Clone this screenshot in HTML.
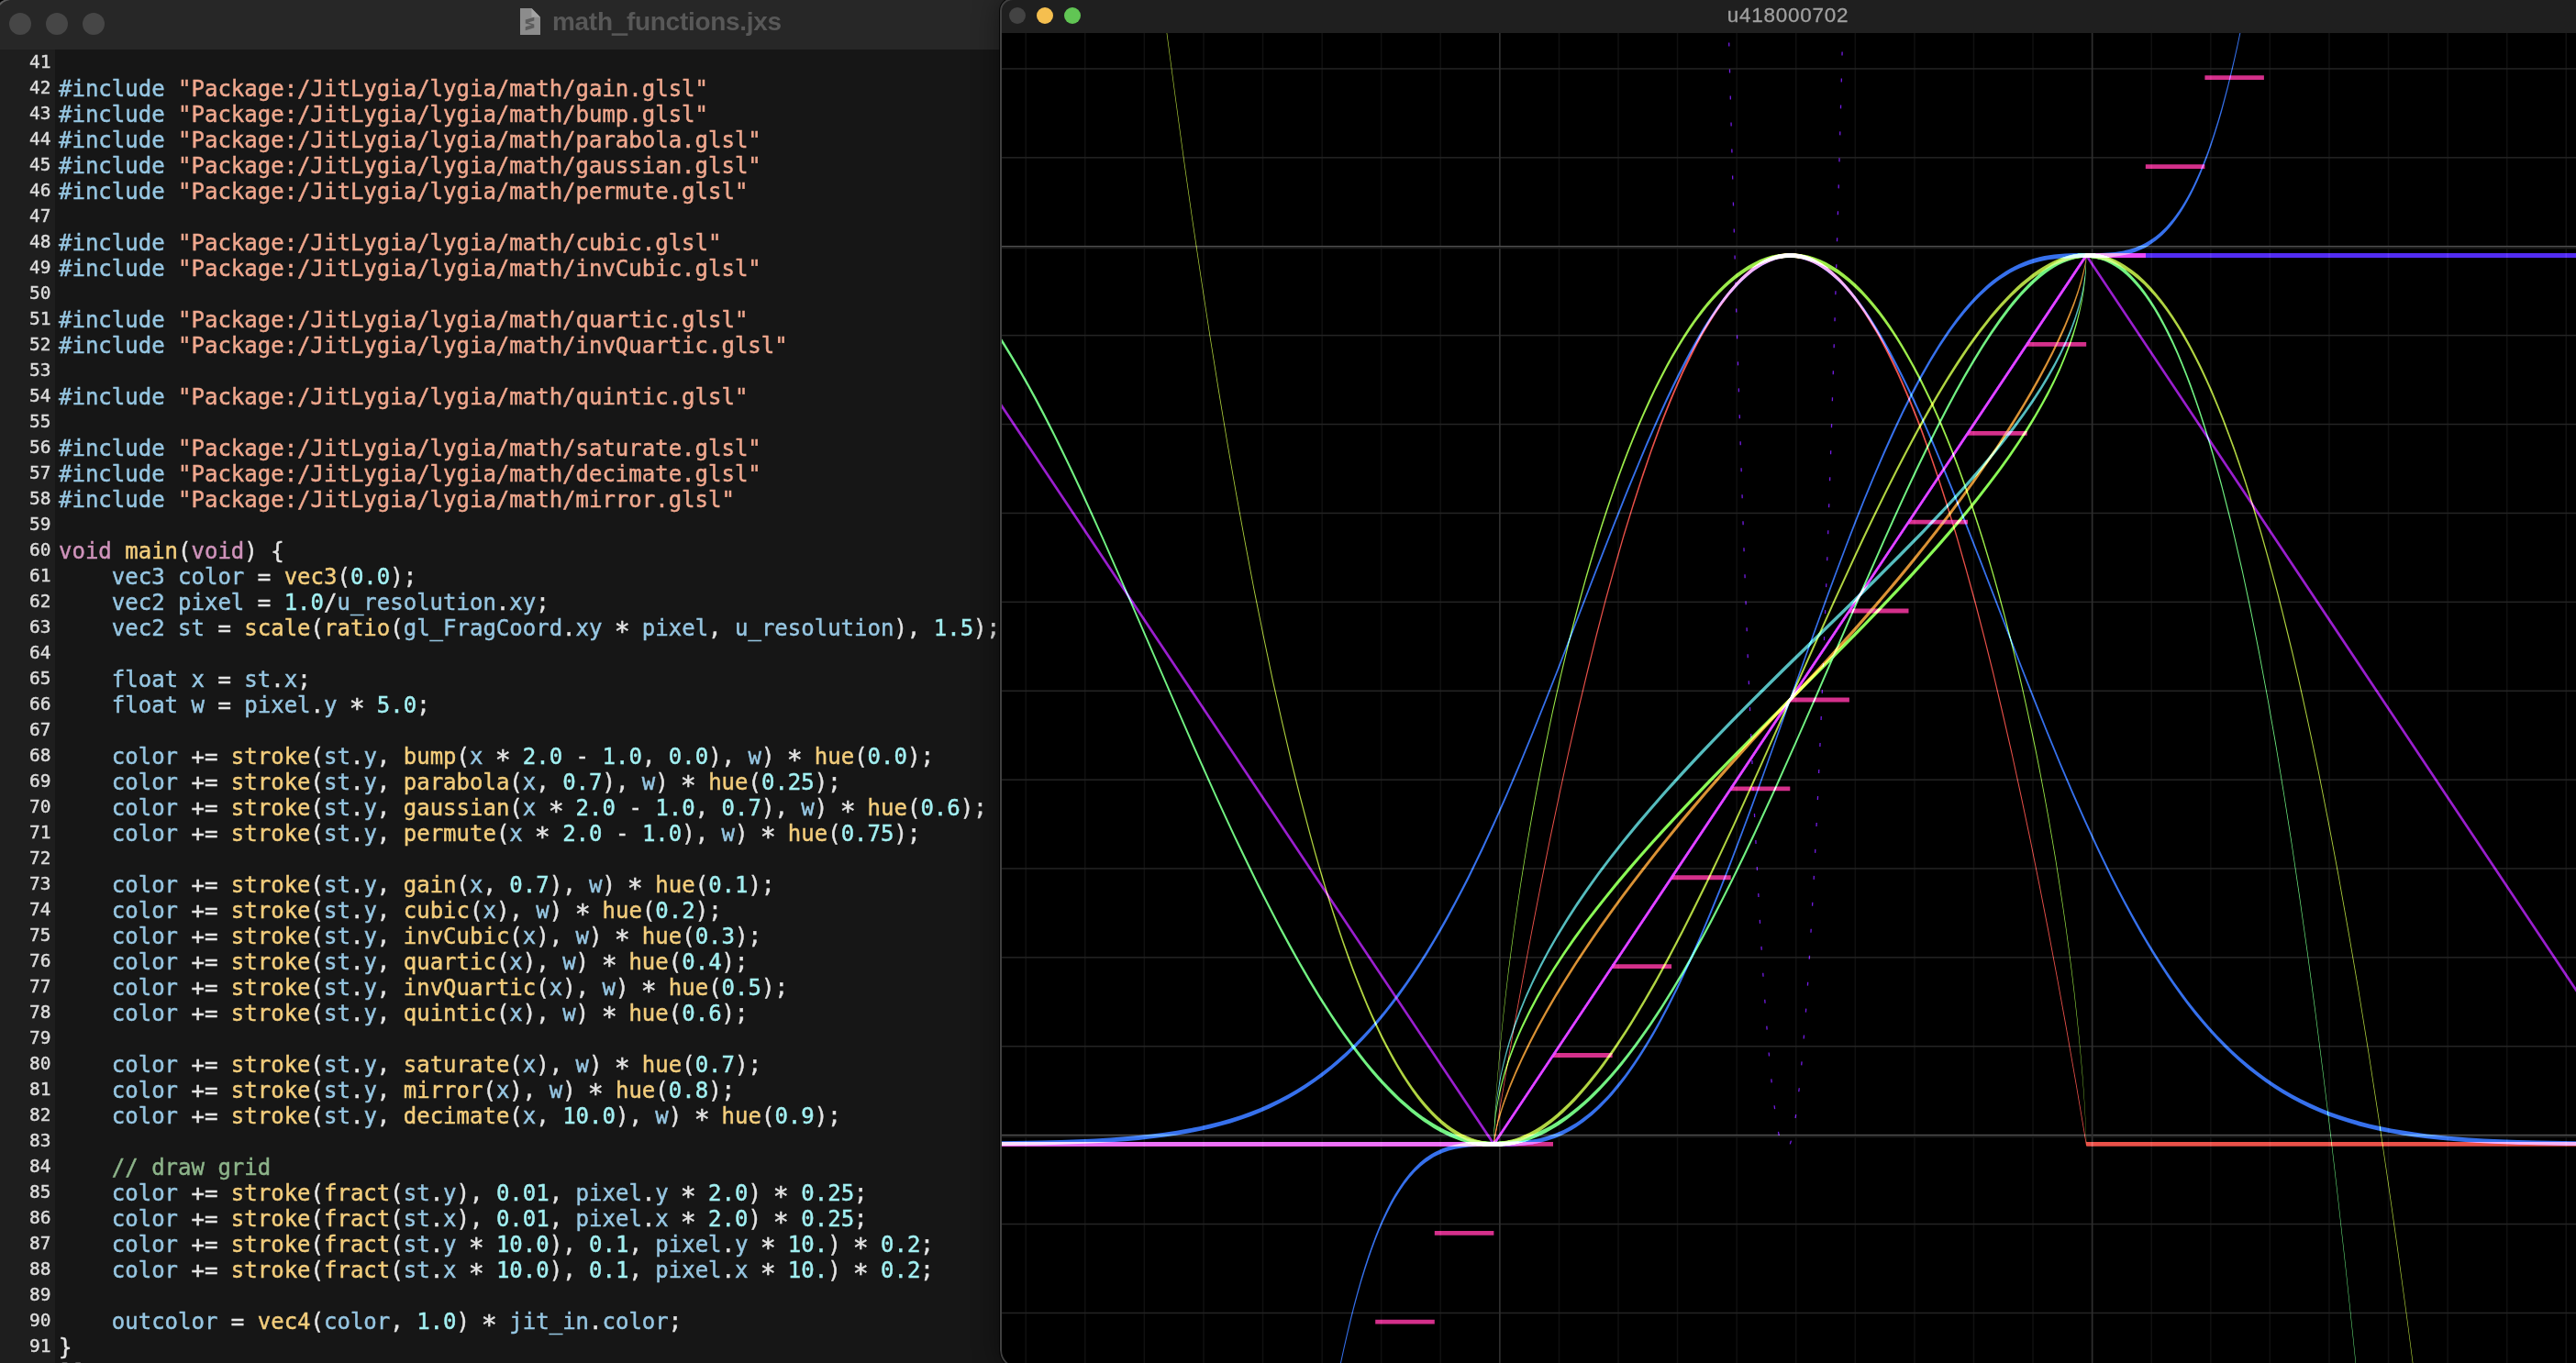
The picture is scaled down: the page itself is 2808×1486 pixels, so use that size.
<!DOCTYPE html>
<html>
<head>
<meta charset="utf-8">
<title>math_functions.jxs</title>
<style>
html,body{margin:0;padding:0;background:#000;}
body{width:2808px;height:1486px;overflow:hidden;position:relative;font-family:"Liberation Sans",sans-serif;}
.lw{position:absolute;left:-7px;top:-2px;width:1107px;height:1488px;background:#161616;border-top-left-radius:20px;overflow:hidden;}
.lwi{position:absolute;left:7px;top:2px;right:0;bottom:0;}
.lw .hl{position:absolute;left:0;top:0;width:60px;height:60px;border-top-left-radius:20px;box-shadow:inset 1.6px 1.6px 0 rgba(255,255,255,.25);}
.lt{position:absolute;left:-7px;top:-2px;right:0;height:56px;background:#272727;}
.lt>*{margin-left:7px;margin-top:2px}
.lt .dot{position:absolute;top:14px;width:24px;height:24px;border-radius:50%;background:#464646;}
.lt .title{position:absolute;left:602px;top:-3px;height:54px;line-height:54px;font-weight:bold;font-size:28px;letter-spacing:-0.3px;color:#585858;white-space:nowrap;will-change:transform;}
.lt svg.ico{position:absolute;left:567px;top:9px;}
.gut{position:absolute;left:-7px;top:54px;width:67px;bottom:0;background:#1e1e1e;}
.code{position:absolute;left:0;top:55px;will-change:transform;-webkit-text-stroke:0.45px;width:1100px;font-family:"DejaVu Sans Mono","Liberation Mono",monospace;font-size:24px;line-height:28px;color:#e4e4e4;}
.ln{height:28px;position:relative;}
.no{position:absolute;left:0;top:-1px;width:55.5px;text-align:right;font-size:19.5px;color:#dcdcdc;line-height:28px;}
.tx{position:absolute;left:64px;top:0;white-space:pre;}
.i{color:#96c6e2}.s{color:#f0a88e}.f{color:#f3cd7c}.n{color:#a2f0f2}.o{color:#e4e4e4}.a{color:#e4e4e4;display:inline-block;transform:translateY(4px) scale(1.18)}.k{color:#cf93bb}.m{color:#8db48a}
.rw{position:absolute;left:1090px;top:-2px;width:1740px;height:1494px;background:#000;border-radius:14px 0 0 20px;overflow:hidden;box-shadow:0 0 0 1px rgba(0,0,0,.8),0 0 30px rgba(0,0,0,.45);}
.rwi{position:absolute;left:0;top:2px;right:0;bottom:0;}
.rw .ring{position:absolute;left:0;top:0;right:-10px;bottom:0;border:2px solid #404040;border-radius:14px 0 0 20px;}
.rt{position:absolute;left:0;top:0;width:100%;height:36px;background:#1f1f1f;}
.rt .dot{position:absolute;top:8px;width:18px;height:18px;border-radius:50%;}
.rt .title{position:absolute;left:0;width:1718px;text-align:center;top:0;height:36px;line-height:34px;font-size:22.5px;letter-spacing:0.75px;-webkit-text-stroke:0.3px;color:#a0a0a0;will-change:transform;}
svg.plot{position:absolute;left:2px;top:36px;isolation:isolate;}
svg.plot .c{mix-blend-mode:plus-lighter;}
</style>
</head>
<body>
<div class="lw"><div class="lwi">
  <div class="lt">
    <div class="dot" style="left:10px"></div>
    <div class="dot" style="left:50px"></div>
    <div class="dot" style="left:90px"></div>
    <svg class="ico" width="22" height="29" viewBox="0 0 23 30" preserveAspectRatio="none"><path d="M0,0H13L23,10V30H0Z" fill="#8c8c8c"/><path d="M13,0L23,10H13Z" fill="#a4a4a4"/><path d="M6,13L16,10V14L9,16L16,18V22L6,25V21L13,19L6,17Z" fill="#5c5c5c"/></svg>
    <div class="title">math<span style="-webkit-text-stroke:1.5px #585858;position:relative;top:1.5px">_</span>functions.jxs</div>
  </div>
  <div class="gut"></div>
  <div class="code">
<div class="ln"><span class="no">41</span><span class="tx"></span></div>
<div class="ln"><span class="no">42</span><span class="tx"><span class="i">#include</span> <span class="s">&quot;Package:/JitLygia/lygia/math/gain.glsl&quot;</span></span></div>
<div class="ln"><span class="no">43</span><span class="tx"><span class="i">#include</span> <span class="s">&quot;Package:/JitLygia/lygia/math/bump.glsl&quot;</span></span></div>
<div class="ln"><span class="no">44</span><span class="tx"><span class="i">#include</span> <span class="s">&quot;Package:/JitLygia/lygia/math/parabola.glsl&quot;</span></span></div>
<div class="ln"><span class="no">45</span><span class="tx"><span class="i">#include</span> <span class="s">&quot;Package:/JitLygia/lygia/math/gaussian.glsl&quot;</span></span></div>
<div class="ln"><span class="no">46</span><span class="tx"><span class="i">#include</span> <span class="s">&quot;Package:/JitLygia/lygia/math/permute.glsl&quot;</span></span></div>
<div class="ln"><span class="no">47</span><span class="tx"></span></div>
<div class="ln"><span class="no">48</span><span class="tx"><span class="i">#include</span> <span class="s">&quot;Package:/JitLygia/lygia/math/cubic.glsl&quot;</span></span></div>
<div class="ln"><span class="no">49</span><span class="tx"><span class="i">#include</span> <span class="s">&quot;Package:/JitLygia/lygia/math/invCubic.glsl&quot;</span></span></div>
<div class="ln"><span class="no">50</span><span class="tx"></span></div>
<div class="ln"><span class="no">51</span><span class="tx"><span class="i">#include</span> <span class="s">&quot;Package:/JitLygia/lygia/math/quartic.glsl&quot;</span></span></div>
<div class="ln"><span class="no">52</span><span class="tx"><span class="i">#include</span> <span class="s">&quot;Package:/JitLygia/lygia/math/invQuartic.glsl&quot;</span></span></div>
<div class="ln"><span class="no">53</span><span class="tx"></span></div>
<div class="ln"><span class="no">54</span><span class="tx"><span class="i">#include</span> <span class="s">&quot;Package:/JitLygia/lygia/math/quintic.glsl&quot;</span></span></div>
<div class="ln"><span class="no">55</span><span class="tx"></span></div>
<div class="ln"><span class="no">56</span><span class="tx"><span class="i">#include</span> <span class="s">&quot;Package:/JitLygia/lygia/math/saturate.glsl&quot;</span></span></div>
<div class="ln"><span class="no">57</span><span class="tx"><span class="i">#include</span> <span class="s">&quot;Package:/JitLygia/lygia/math/decimate.glsl&quot;</span></span></div>
<div class="ln"><span class="no">58</span><span class="tx"><span class="i">#include</span> <span class="s">&quot;Package:/JitLygia/lygia/math/mirror.glsl&quot;</span></span></div>
<div class="ln"><span class="no">59</span><span class="tx"></span></div>
<div class="ln"><span class="no">60</span><span class="tx"><span class="k">void</span> <span class="f">main</span><span class="o">(</span><span class="k">void</span><span class="o">)</span> <span class="o">{</span></span></div>
<div class="ln"><span class="no">61</span><span class="tx">    <span class="i">vec3</span> <span class="i">color</span> <span class="o">=</span> <span class="f">vec3</span><span class="o">(</span><span class="n">0.0</span><span class="o">)</span><span class="o">;</span></span></div>
<div class="ln"><span class="no">62</span><span class="tx">    <span class="i">vec2</span> <span class="i">pixel</span> <span class="o">=</span> <span class="n">1.0</span><span class="o">/</span><span class="i">u_resolution</span><span class="o">.</span><span class="i">xy</span><span class="o">;</span></span></div>
<div class="ln"><span class="no">63</span><span class="tx">    <span class="i">vec2</span> <span class="i">st</span> <span class="o">=</span> <span class="f">scale</span><span class="o">(</span><span class="f">ratio</span><span class="o">(</span><span class="i">gl_FragCoord</span><span class="o">.</span><span class="i">xy</span> <span class="a">*</span> <span class="i">pixel</span><span class="o">,</span> <span class="i">u_resolution</span><span class="o">)</span><span class="o">,</span> <span class="n">1.5</span><span class="o">)</span><span class="o">;</span></span></div>
<div class="ln"><span class="no">64</span><span class="tx"></span></div>
<div class="ln"><span class="no">65</span><span class="tx">    <span class="i">float</span> <span class="i">x</span> <span class="o">=</span> <span class="i">st</span><span class="o">.</span><span class="i">x</span><span class="o">;</span></span></div>
<div class="ln"><span class="no">66</span><span class="tx">    <span class="i">float</span> <span class="i">w</span> <span class="o">=</span> <span class="i">pixel</span><span class="o">.</span><span class="i">y</span> <span class="a">*</span> <span class="n">5.0</span><span class="o">;</span></span></div>
<div class="ln"><span class="no">67</span><span class="tx"></span></div>
<div class="ln"><span class="no">68</span><span class="tx">    <span class="i">color</span> <span class="o">+</span><span class="o">=</span> <span class="f">stroke</span><span class="o">(</span><span class="i">st</span><span class="o">.</span><span class="i">y</span><span class="o">,</span> <span class="f">bump</span><span class="o">(</span><span class="i">x</span> <span class="a">*</span> <span class="n">2.0</span> <span class="o">-</span> <span class="n">1.0</span><span class="o">,</span> <span class="n">0.0</span><span class="o">)</span><span class="o">,</span> <span class="i">w</span><span class="o">)</span> <span class="a">*</span> <span class="f">hue</span><span class="o">(</span><span class="n">0.0</span><span class="o">)</span><span class="o">;</span></span></div>
<div class="ln"><span class="no">69</span><span class="tx">    <span class="i">color</span> <span class="o">+</span><span class="o">=</span> <span class="f">stroke</span><span class="o">(</span><span class="i">st</span><span class="o">.</span><span class="i">y</span><span class="o">,</span> <span class="f">parabola</span><span class="o">(</span><span class="i">x</span><span class="o">,</span> <span class="n">0.7</span><span class="o">)</span><span class="o">,</span> <span class="i">w</span><span class="o">)</span> <span class="a">*</span> <span class="f">hue</span><span class="o">(</span><span class="n">0.25</span><span class="o">)</span><span class="o">;</span></span></div>
<div class="ln"><span class="no">70</span><span class="tx">    <span class="i">color</span> <span class="o">+</span><span class="o">=</span> <span class="f">stroke</span><span class="o">(</span><span class="i">st</span><span class="o">.</span><span class="i">y</span><span class="o">,</span> <span class="f">gaussian</span><span class="o">(</span><span class="i">x</span> <span class="a">*</span> <span class="n">2.0</span> <span class="o">-</span> <span class="n">1.0</span><span class="o">,</span> <span class="n">0.7</span><span class="o">)</span><span class="o">,</span> <span class="i">w</span><span class="o">)</span> <span class="a">*</span> <span class="f">hue</span><span class="o">(</span><span class="n">0.6</span><span class="o">)</span><span class="o">;</span></span></div>
<div class="ln"><span class="no">71</span><span class="tx">    <span class="i">color</span> <span class="o">+</span><span class="o">=</span> <span class="f">stroke</span><span class="o">(</span><span class="i">st</span><span class="o">.</span><span class="i">y</span><span class="o">,</span> <span class="f">permute</span><span class="o">(</span><span class="i">x</span> <span class="a">*</span> <span class="n">2.0</span> <span class="o">-</span> <span class="n">1.0</span><span class="o">)</span><span class="o">,</span> <span class="i">w</span><span class="o">)</span> <span class="a">*</span> <span class="f">hue</span><span class="o">(</span><span class="n">0.75</span><span class="o">)</span><span class="o">;</span></span></div>
<div class="ln"><span class="no">72</span><span class="tx"></span></div>
<div class="ln"><span class="no">73</span><span class="tx">    <span class="i">color</span> <span class="o">+</span><span class="o">=</span> <span class="f">stroke</span><span class="o">(</span><span class="i">st</span><span class="o">.</span><span class="i">y</span><span class="o">,</span> <span class="f">gain</span><span class="o">(</span><span class="i">x</span><span class="o">,</span> <span class="n">0.7</span><span class="o">)</span><span class="o">,</span> <span class="i">w</span><span class="o">)</span> <span class="a">*</span> <span class="f">hue</span><span class="o">(</span><span class="n">0.1</span><span class="o">)</span><span class="o">;</span></span></div>
<div class="ln"><span class="no">74</span><span class="tx">    <span class="i">color</span> <span class="o">+</span><span class="o">=</span> <span class="f">stroke</span><span class="o">(</span><span class="i">st</span><span class="o">.</span><span class="i">y</span><span class="o">,</span> <span class="f">cubic</span><span class="o">(</span><span class="i">x</span><span class="o">)</span><span class="o">,</span> <span class="i">w</span><span class="o">)</span> <span class="a">*</span> <span class="f">hue</span><span class="o">(</span><span class="n">0.2</span><span class="o">)</span><span class="o">;</span></span></div>
<div class="ln"><span class="no">75</span><span class="tx">    <span class="i">color</span> <span class="o">+</span><span class="o">=</span> <span class="f">stroke</span><span class="o">(</span><span class="i">st</span><span class="o">.</span><span class="i">y</span><span class="o">,</span> <span class="f">invCubic</span><span class="o">(</span><span class="i">x</span><span class="o">)</span><span class="o">,</span> <span class="i">w</span><span class="o">)</span> <span class="a">*</span> <span class="f">hue</span><span class="o">(</span><span class="n">0.3</span><span class="o">)</span><span class="o">;</span></span></div>
<div class="ln"><span class="no">76</span><span class="tx">    <span class="i">color</span> <span class="o">+</span><span class="o">=</span> <span class="f">stroke</span><span class="o">(</span><span class="i">st</span><span class="o">.</span><span class="i">y</span><span class="o">,</span> <span class="f">quartic</span><span class="o">(</span><span class="i">x</span><span class="o">)</span><span class="o">,</span> <span class="i">w</span><span class="o">)</span> <span class="a">*</span> <span class="f">hue</span><span class="o">(</span><span class="n">0.4</span><span class="o">)</span><span class="o">;</span></span></div>
<div class="ln"><span class="no">77</span><span class="tx">    <span class="i">color</span> <span class="o">+</span><span class="o">=</span> <span class="f">stroke</span><span class="o">(</span><span class="i">st</span><span class="o">.</span><span class="i">y</span><span class="o">,</span> <span class="f">invQuartic</span><span class="o">(</span><span class="i">x</span><span class="o">)</span><span class="o">,</span> <span class="i">w</span><span class="o">)</span> <span class="a">*</span> <span class="f">hue</span><span class="o">(</span><span class="n">0.5</span><span class="o">)</span><span class="o">;</span></span></div>
<div class="ln"><span class="no">78</span><span class="tx">    <span class="i">color</span> <span class="o">+</span><span class="o">=</span> <span class="f">stroke</span><span class="o">(</span><span class="i">st</span><span class="o">.</span><span class="i">y</span><span class="o">,</span> <span class="f">quintic</span><span class="o">(</span><span class="i">x</span><span class="o">)</span><span class="o">,</span> <span class="i">w</span><span class="o">)</span> <span class="a">*</span> <span class="f">hue</span><span class="o">(</span><span class="n">0.6</span><span class="o">)</span><span class="o">;</span></span></div>
<div class="ln"><span class="no">79</span><span class="tx"></span></div>
<div class="ln"><span class="no">80</span><span class="tx">    <span class="i">color</span> <span class="o">+</span><span class="o">=</span> <span class="f">stroke</span><span class="o">(</span><span class="i">st</span><span class="o">.</span><span class="i">y</span><span class="o">,</span> <span class="f">saturate</span><span class="o">(</span><span class="i">x</span><span class="o">)</span><span class="o">,</span> <span class="i">w</span><span class="o">)</span> <span class="a">*</span> <span class="f">hue</span><span class="o">(</span><span class="n">0.7</span><span class="o">)</span><span class="o">;</span></span></div>
<div class="ln"><span class="no">81</span><span class="tx">    <span class="i">color</span> <span class="o">+</span><span class="o">=</span> <span class="f">stroke</span><span class="o">(</span><span class="i">st</span><span class="o">.</span><span class="i">y</span><span class="o">,</span> <span class="f">mirror</span><span class="o">(</span><span class="i">x</span><span class="o">)</span><span class="o">,</span> <span class="i">w</span><span class="o">)</span> <span class="a">*</span> <span class="f">hue</span><span class="o">(</span><span class="n">0.8</span><span class="o">)</span><span class="o">;</span></span></div>
<div class="ln"><span class="no">82</span><span class="tx">    <span class="i">color</span> <span class="o">+</span><span class="o">=</span> <span class="f">stroke</span><span class="o">(</span><span class="i">st</span><span class="o">.</span><span class="i">y</span><span class="o">,</span> <span class="f">decimate</span><span class="o">(</span><span class="i">x</span><span class="o">,</span> <span class="n">10.0</span><span class="o">)</span><span class="o">,</span> <span class="i">w</span><span class="o">)</span> <span class="a">*</span> <span class="f">hue</span><span class="o">(</span><span class="n">0.9</span><span class="o">)</span><span class="o">;</span></span></div>
<div class="ln"><span class="no">83</span><span class="tx"></span></div>
<div class="ln"><span class="no">84</span><span class="tx">    <span class="m">// draw grid</span></span></div>
<div class="ln"><span class="no">85</span><span class="tx">    <span class="i">color</span> <span class="o">+</span><span class="o">=</span> <span class="f">stroke</span><span class="o">(</span><span class="f">fract</span><span class="o">(</span><span class="i">st</span><span class="o">.</span><span class="i">y</span><span class="o">)</span><span class="o">,</span> <span class="n">0.01</span><span class="o">,</span> <span class="i">pixel</span><span class="o">.</span><span class="i">y</span> <span class="a">*</span> <span class="n">2.0</span><span class="o">)</span> <span class="a">*</span> <span class="n">0.25</span><span class="o">;</span></span></div>
<div class="ln"><span class="no">86</span><span class="tx">    <span class="i">color</span> <span class="o">+</span><span class="o">=</span> <span class="f">stroke</span><span class="o">(</span><span class="f">fract</span><span class="o">(</span><span class="i">st</span><span class="o">.</span><span class="i">x</span><span class="o">)</span><span class="o">,</span> <span class="n">0.01</span><span class="o">,</span> <span class="i">pixel</span><span class="o">.</span><span class="i">x</span> <span class="a">*</span> <span class="n">2.0</span><span class="o">)</span> <span class="a">*</span> <span class="n">0.25</span><span class="o">;</span></span></div>
<div class="ln"><span class="no">87</span><span class="tx">    <span class="i">color</span> <span class="o">+</span><span class="o">=</span> <span class="f">stroke</span><span class="o">(</span><span class="f">fract</span><span class="o">(</span><span class="i">st</span><span class="o">.</span><span class="i">y</span> <span class="a">*</span> <span class="n">10.0</span><span class="o">)</span><span class="o">,</span> <span class="n">0.1</span><span class="o">,</span> <span class="i">pixel</span><span class="o">.</span><span class="i">y</span> <span class="a">*</span> <span class="n">10.</span><span class="o">)</span> <span class="a">*</span> <span class="n">0.2</span><span class="o">;</span></span></div>
<div class="ln"><span class="no">88</span><span class="tx">    <span class="i">color</span> <span class="o">+</span><span class="o">=</span> <span class="f">stroke</span><span class="o">(</span><span class="f">fract</span><span class="o">(</span><span class="i">st</span><span class="o">.</span><span class="i">x</span> <span class="a">*</span> <span class="n">10.0</span><span class="o">)</span><span class="o">,</span> <span class="n">0.1</span><span class="o">,</span> <span class="i">pixel</span><span class="o">.</span><span class="i">x</span> <span class="a">*</span> <span class="n">10.</span><span class="o">)</span> <span class="a">*</span> <span class="n">0.2</span><span class="o">;</span></span></div>
<div class="ln"><span class="no">89</span><span class="tx"></span></div>
<div class="ln"><span class="no">90</span><span class="tx">    <span class="i">outcolor</span> <span class="o">=</span> <span class="f">vec4</span><span class="o">(</span><span class="i">color</span><span class="o">,</span> <span class="n">1.0</span><span class="o">)</span> <span class="a">*</span> <span class="i">jit_in</span><span class="o">.</span><span class="i">color</span><span class="o">;</span></span></div>
<div class="ln"><span class="no">91</span><span class="tx"><span class="o">}</span></span></div>
<div class="ln"><span class="no">92</span><span class="tx"><span class="o">]</span><span class="o">]</span><span class="o">&gt;</span></span></div>
  </div>
</div><div class="hl"></div></div>
<div class="rw"><div class="rwi">
  <div class="rt">
    <div class="dot" style="left:10px;background:#434343"></div>
    <div class="dot" style="left:40px;background:#f5bf4f"></div>
    <div class="dot" style="left:70px;background:#61c554"></div>
    <div class="title">u418000702</div>
  </div>
<svg class="plot" width="1716" height="1450" viewBox="1092 36 1716 1450">
<defs><filter id="p3" filterUnits="userSpaceOnUse" x="1092" y="36" width="1716" height="1450" color-interpolation-filters="linearRGB"><feColorMatrix type="matrix" values="0.8225 0.1774 0 0 0  0.0332 0.9669 0 0 0  0.0171 0.0724 0.9108 0 0  0 0 0 1 0"/></filter></defs>
<g filter="url(#p3)">
<rect x="1092" y="36" width="1716" height="1450" fill="#000"/>
<g class="grid">
<rect x="1117.5" y="36" width="1.5" height="1450" fill="#101010"/>
<rect x="1182" y="36" width="1.5" height="1450" fill="#101010"/>
<rect x="1246.6" y="36" width="1.5" height="1450" fill="#101010"/>
<rect x="1311.2" y="36" width="1.5" height="1450" fill="#101010"/>
<rect x="1375.8" y="36" width="1.5" height="1450" fill="#101010"/>
<rect x="1440.4" y="36" width="1.5" height="1450" fill="#101010"/>
<rect x="1504.9" y="36" width="1.5" height="1450" fill="#101010"/>
<rect x="1569.5" y="36" width="1.5" height="1450" fill="#101010"/>
<rect x="1698.7" y="36" width="1.5" height="1450" fill="#101010"/>
<rect x="1763.3" y="36" width="1.5" height="1450" fill="#101010"/>
<rect x="1827.8" y="36" width="1.5" height="1450" fill="#101010"/>
<rect x="1892.4" y="36" width="1.5" height="1450" fill="#101010"/>
<rect x="1957" y="36" width="1.5" height="1450" fill="#101010"/>
<rect x="2021.6" y="36" width="1.5" height="1450" fill="#101010"/>
<rect x="2086.2" y="36" width="1.5" height="1450" fill="#101010"/>
<rect x="2150.7" y="36" width="1.5" height="1450" fill="#101010"/>
<rect x="2215.3" y="36" width="1.5" height="1450" fill="#101010"/>
<rect x="2344.5" y="36" width="1.5" height="1450" fill="#101010"/>
<rect x="2409.1" y="36" width="1.5" height="1450" fill="#101010"/>
<rect x="2473.6" y="36" width="1.5" height="1450" fill="#101010"/>
<rect x="2538.2" y="36" width="1.5" height="1450" fill="#101010"/>
<rect x="2602.8" y="36" width="1.5" height="1450" fill="#101010"/>
<rect x="2667.4" y="36" width="1.5" height="1450" fill="#101010"/>
<rect x="2732" y="36" width="1.5" height="1450" fill="#101010"/>
<rect x="2796.5" y="36" width="1.5" height="1450" fill="#101010"/>
<rect x="1092" y="1430.7" width="1716" height="1.5" fill="#242424"/>
<rect x="1092" y="1333.8" width="1716" height="1.5" fill="#242424"/>
<rect x="1092" y="1140" width="1716" height="1.5" fill="#242424"/>
<rect x="1092" y="1043.1" width="1716" height="1.5" fill="#242424"/>
<rect x="1092" y="946.2" width="1716" height="1.5" fill="#242424"/>
<rect x="1092" y="849.4" width="1716" height="1.5" fill="#242424"/>
<rect x="1092" y="752.5" width="1716" height="1.5" fill="#242424"/>
<rect x="1092" y="655.6" width="1716" height="1.5" fill="#242424"/>
<rect x="1092" y="558.7" width="1716" height="1.5" fill="#242424"/>
<rect x="1092" y="461.8" width="1716" height="1.5" fill="#242424"/>
<rect x="1092" y="364.9" width="1716" height="1.5" fill="#242424"/>
<rect x="1092" y="171.1" width="1716" height="1.5" fill="#242424"/>
<rect x="1092" y="74.2" width="1716" height="1.5" fill="#242424"/>
<rect x="1634" y="36" width="1.7" height="1450" fill="#2e2e2e"/>
<rect x="1092" y="1238.2" width="1716" height="2" fill="#181818"/>
<rect x="1092" y="1236.8" width="1716" height="1.4" fill="#505050"/>
<rect x="2279.8" y="36" width="1.7" height="1450" fill="#2e2e2e"/>
<rect x="1092" y="269.3" width="1716" height="2" fill="#181818"/>
<rect x="1092" y="267.9" width="1716" height="1.4" fill="#505050"/>
</g>
<path class="c" fill="#ff4040" d="M1085.5,1245L1628.1,1245L1628.6,1244L1639.8,1177.8L1651,1113.9L1660.6,1061.6L1670.1,1011.1L1680,960L1689.9,910.8L1699.9,863.4L1709.8,817.9L1720.2,772.3L1730.2,730.5L1740.1,690.6L1750,652.5L1760,616.2L1769.9,581.8L1779.9,549.2L1790.3,517.1L1800.2,488.3L1810.1,461.3L1814.9,449L1820.1,436.1L1825.3,423.7L1830.5,411.8L1835.2,401.3L1840.4,390.4L1845.6,379.9L1850.3,370.8L1855.5,361.3L1860.7,352.3L1865.9,343.8L1870.7,336.5L1875.4,329.6L1880.6,322.5L1885.8,316L1890.6,310.4L1895.7,304.8L1900.9,299.7L1906.1,295.1L1910.9,291.3L1916.1,287.6L1921.2,284.5L1926,282L1931.2,279.8L1935.9,278.3L1941.1,277L1946.3,276.3L1951.5,276.1L1956.3,276.3L1961.5,277L1966.6,278.3L1971.4,279.8L1976.2,281.8L1981.3,284.5L1986.5,287.6L1991.7,291.3L1996.5,295L2001.7,299.7L2006.9,304.8L2011.6,309.9L2016.4,315.4L2021.6,321.9L2026.7,329L2031.9,336.5L2037.1,344.5L2042.3,353L2047.1,361.3L2052.2,370.8L2057,379.9L2062.2,390.4L2067.4,401.3L2072.1,411.8L2077.3,423.7L2082.5,436.1L2087.7,449L2092.5,461.2L2097.6,475.1L2102.8,489.5L2112.8,518.4L2122.7,549.1L2132.7,581.7L2143,617.7L2153,654.1L2162.9,692.3L2172.9,732.3L2183.2,776L2193.2,819.8L2203.1,865.4L2213.1,912.9L2223,962.2L2233,1013.3L2242.5,1063.9L2251.6,1113.8L2262.8,1177.7L2274,1244L2274.5,1245L2814.5,1245L2814.5,1249.8L2274.5,1249.8L2274,1248.8L2262.8,1182.6L2251.6,1118.7L2242.5,1068.8L2233,1018.2L2223,967L2213.1,917.7L2203.1,870.3L2193.2,824.6L2183.2,780.9L2172.9,737.1L2162.9,697.1L2153,658.9L2143,622.6L2132.7,586.6L2122.7,554L2112.8,523.2L2102.8,494.3L2097.6,479.9L2092.5,466.1L2087.7,453.8L2082.5,440.9L2077.3,428.5L2072.1,416.6L2067.4,406.1L2062.2,395.2L2057,384.7L2052.2,375.6L2047.1,366.1L2042.3,357.9L2037.1,349.4L2031.9,341.3L2026.7,333.8L2021.6,326.8L2016.4,320.3L2011.6,314.7L2006.9,309.6L2001.7,304.5L1996.5,299.9L1991.7,296.1L1986.5,292.5L1981.3,289.3L1976.2,286.7L1971.4,284.7L1966.6,283.1L1961.5,281.9L1956.3,281.1L1951.5,280.9L1946.3,281.1L1941.1,281.9L1935.9,283.1L1931.2,284.7L1926,286.9L1921.2,289.3L1916.1,292.5L1910.9,296.1L1906.1,299.9L1900.9,304.5L1895.7,309.6L1890.6,315.2L1885.8,320.8L1880.6,327.4L1875.4,334.4L1870.7,341.3L1865.9,348.7L1860.7,357.2L1855.5,366.1L1850.3,375.6L1845.6,384.8L1840.4,395.2L1835.2,406.1L1830.5,416.6L1825.3,428.5L1820.1,440.9L1814.9,453.8L1810.1,466.1L1800.2,493.1L1790.3,521.9L1779.9,554L1769.9,586.6L1760,621L1750,657.3L1740.1,695.4L1730.2,735.4L1720.2,777.2L1709.8,822.7L1699.9,868.3L1689.9,915.7L1680,964.9L1670.1,1015.9L1660.6,1066.5L1651,1118.7L1639.8,1182.6L1628.6,1248.9L1628.1,1249.8L1085.5,1249.8Z"/>
<path class="c" fill="#80ee11" d="M1628.4,1245L1628.7,1232.5L1629.7,1212L1630.8,1193.9L1632.4,1172L1634.4,1149.2L1636.5,1127L1638.9,1103.6L1641.5,1080.5L1644.2,1057.6L1647.3,1033.6L1650.5,1009.8L1654.1,985L1657.8,960.4L1661.7,936L1665.7,911.7L1669.9,887.6L1674.1,864.5L1678.5,841.5L1683,818.6L1687.7,795.9L1692.5,773.2L1697.4,751.4L1702.4,729.8L1707.4,708.9L1712.5,688.2L1717.9,667.6L1723.4,647.2L1728.8,627.5L1734.5,608.1L1740.2,589.3L1745.8,571.3L1751.6,553.5L1757.3,536.9L1762.9,520.9L1768.7,505.1L1774.5,489.9L1780.4,475.3L1786.3,461L1792.3,447.2L1798.3,434.1L1804.4,421.2L1810.6,408.9L1816.7,397.3L1822.8,386.2L1829,375.7L1835.3,365.5L1841.6,355.8L1847.9,346.8L1854.2,338.3L1860.6,330.2L1866.9,322.9L1873.4,315.9L1879.7,309.7L1886.1,303.9L1892.6,298.6L1899.1,293.9L1905.5,289.8L1912,286.2L1918.4,283.1L1925.1,280.6L1931.5,278.6L1938.1,277.2L1944.6,276.4L1951.2,276.1L1957.8,276.4L1964.3,277.2L1970.9,278.6L1977.4,280.5L1984,283L1990.5,286.1L1996.9,289.7L2003.4,293.8L2009.8,298.5L2016.3,303.7L2022.8,309.5L2029.1,315.8L2035.5,322.7L2041.8,330L2048.3,338.1L2054.6,346.6L2060.9,355.6L2067.2,365.2L2073.5,375.4L2079.6,385.9L2085.7,397L2091.9,408.6L2098,420.9L2104.2,433.7L2110.1,446.9L2116.1,460.6L2122.1,474.9L2127.9,489.5L2133.7,504.6L2139.5,520.4L2145.2,536.4L2150.8,553L2156.6,570.8L2162.3,588.8L2167.9,607.5L2173.6,626.9L2179.1,646.6L2184.6,667L2189.9,687.5L2195.1,708.3L2200.1,729.1L2205.1,750.7L2209.9,772.5L2214.8,795.1L2219.5,817.8L2224,840.7L2228.3,863.7L2232.5,886.7L2236.7,910.8L2240.8,935L2244.6,959.3L2248.2,982.8L2251.8,1007.5L2255,1031.2L2258.1,1055L2261,1079.1L2263.7,1103.6L2266.1,1127L2268.2,1149.2L2270.2,1172L2271.8,1193.9L2272.9,1212L2273.9,1232.5L2274.2,1245L2274.2,1249.8L2273.9,1237.3L2272.9,1216.9L2271.8,1198.7L2270.2,1176.9L2268.2,1154L2266.1,1131.8L2263.7,1108.4L2261,1084L2258.1,1059.9L2255,1036L2251.8,1012.3L2248.2,987.6L2244.6,964.2L2240.8,939.8L2236.7,915.6L2232.5,891.5L2228.3,868.5L2224,845.5L2219.5,822.7L2214.8,799.9L2209.9,777.3L2205.1,755.6L2200.1,733.9L2195.1,713.1L2189.9,692.4L2184.6,671.8L2179.1,651.4L2173.6,631.8L2167.9,612.3L2162.3,593.7L2156.6,575.7L2150.8,557.9L2145.2,541.3L2139.5,525.3L2133.7,509.5L2127.9,494.3L2122.1,479.7L2116.1,465.4L2110.1,451.7L2104.2,438.6L2098,425.7L2091.9,413.5L2085.7,401.8L2079.6,390.7L2073.5,380.2L2067.2,370L2060.9,360.4L2054.6,351.4L2048.3,343L2041.8,334.9L2035.5,327.5L2029.1,320.6L2022.8,314.4L2016.3,308.6L2009.8,303.3L2003.4,298.6L1996.9,294.5L1990.5,290.9L1984,287.9L1977.4,285.3L1970.9,283.4L1964.3,282L1957.8,281.2L1951.2,280.9L1944.6,281.2L1938.1,282L1931.5,283.5L1925.1,285.4L1918.4,288L1912,291L1905.5,294.6L1899.1,298.7L1892.6,303.4L1886.1,308.7L1879.7,314.5L1873.4,320.8L1866.9,327.7L1860.6,335.1L1854.2,343.2L1847.9,351.6L1841.6,360.7L1835.3,370.3L1829,380.5L1822.8,391L1816.7,402.1L1810.6,413.8L1804.4,426L1798.3,438.9L1792.3,452.1L1786.3,465.8L1780.4,480.1L1774.5,494.7L1768.7,509.9L1762.9,525.7L1757.3,541.7L1751.6,558.4L1745.8,576.2L1740.2,594.2L1734.5,612.9L1728.8,632.4L1723.4,652L1717.9,672.4L1712.5,693L1707.4,713.8L1702.4,734.6L1697.4,756.3L1692.5,778.1L1687.7,800.7L1683,823.5L1678.5,846.4L1674.1,869.4L1669.9,892.5L1665.7,916.6L1661.7,940.8L1657.8,965.2L1654.1,989.8L1650.5,1014.6L1647.3,1038.4L1644.2,1062.5L1641.5,1085.4L1638.9,1108.4L1636.5,1131.8L1634.4,1154L1632.4,1176.9L1630.8,1198.7L1629.7,1216.9L1628.7,1237.3L1628.4,1249.8Z"/>
<path class="c" fill="#1872f4" d="M1085.5,1244.3L1134.8,1243.6L1156,1243L1175.5,1242.3L1193.6,1241.5L1210.5,1240.5L1226.5,1239.3L1241.2,1238L1255.5,1236.5L1269.3,1234.8L1282.7,1232.8L1295.2,1230.6L1307.3,1228.2L1319,1225.6L1330.2,1222.8L1341.5,1219.5L1352.7,1215.9L1363.5,1212L1373.9,1207.9L1384.3,1203.3L1394.2,1198.5L1404.2,1193.2L1413.7,1187.7L1423.2,1181.8L1432.7,1175.3L1441.8,1168.6L1450.9,1161.4L1459.5,1154.1L1468.2,1146.3L1476.8,1138L1485.5,1129.1L1493.7,1120.2L1501.5,1111.3L1509.2,1101.9L1517,1092L1524.8,1081.6L1532.6,1070.8L1539.9,1060L1547.7,1048.2L1555.1,1036.6L1562.4,1024.4L1570.2,1011.1L1577.5,998.1L1585.3,983.8L1592.7,969.8L1600.5,954.5L1608.2,938.7L1616,922.5L1629.4,893.5L1642.8,863.2L1656.7,830.7L1671.4,795L1684.3,762.7L1698.2,727.5L1742.7,612.1L1758.7,571.1L1773.8,533.1L1787.7,499.5L1795,482.1L1802.4,465.2L1809.3,449.7L1816.2,434.6L1823.1,420L1829.6,406.8L1836.1,394.1L1842.1,382.7L1849.5,369.6L1856.8,357.1L1864.2,345.4L1871.1,335.2L1878,325.7L1884.9,317L1891.9,309L1898.3,302.3L1905.3,296L1911.7,290.8L1915.2,288.4L1918.7,286.1L1922.1,284.1L1925.1,282.5L1928.6,281L1932.1,279.6L1935.5,278.4L1938.5,277.6L1942,276.9L1945,276.5L1948.5,276.2L1951.5,276.1L1954.5,276.2L1958,276.5L1961,277L1964.5,277.7L1967.5,278.6L1971,279.7L1974.4,281.1L1977.9,282.8L1980.9,284.4L1984.4,286.4L1987.8,288.7L1991.3,291.1L1997.8,296.3L2004.7,302.7L2011.2,309.5L2018.1,317.5L2025,326.3L2031.9,335.8L2038.8,346.1L2046.2,357.8L2053.5,370.3L2060.9,383.5L2066.9,395L2073.4,407.7L2079.9,420.9L2086.4,434.6L2093.3,449.6L2100.2,465.2L2107.6,482.1L2114.9,499.4L2128.8,533.1L2143.9,571.1L2159.9,612.1L2204.4,727.4L2218.3,762.6L2231.2,795L2245.9,830.7L2259.8,863.2L2273.2,893.5L2286.6,922.5L2294.4,938.7L2302.1,954.5L2309.9,969.8L2317.3,983.8L2325.1,998.1L2332.4,1011.1L2340.2,1024.4L2347.5,1036.5L2354.9,1048.2L2362.7,1060L2370,1070.8L2377.8,1081.6L2385.1,1091.4L2392.9,1101.3L2400.7,1110.8L2408.5,1119.7L2416.7,1128.7L2425.4,1137.6L2434,1145.9L2442.6,1153.7L2451.3,1161.1L2460.4,1168.3L2469.5,1175L2479,1181.5L2488.5,1187.5L2498,1193L2507.9,1198.3L2517.9,1203.1L2528.3,1207.7L2538.6,1211.9L2549.4,1215.8L2560.2,1219.3L2571.5,1222.5L2582.7,1225.4L2594.4,1228.1L2606.5,1230.5L2619,1232.6L2632,1234.6L2645.8,1236.4L2660.1,1237.9L2674.8,1239.2L2690.8,1240.4L2707.7,1241.4L2725.4,1242.2L2744.9,1242.9L2765.6,1243.5L2814.5,1244.3L2814.5,1249.2L2765.6,1248.3L2744.9,1247.8L2725.4,1247.1L2707.7,1246.2L2690.8,1245.2L2674.8,1244L2660.1,1242.7L2645.8,1241.2L2632,1239.4L2619,1237.5L2606.5,1235.3L2594.4,1232.9L2582.7,1230.2L2571.5,1227.4L2560.2,1224.1L2549.4,1220.6L2538.6,1216.7L2528.3,1212.5L2517.9,1208L2507.9,1203.1L2498,1197.8L2488.5,1192.3L2479,1186.3L2469.5,1179.8L2460.4,1173.1L2451.3,1165.9L2442.6,1158.6L2434,1150.7L2425.4,1142.4L2416.7,1133.5L2408.5,1124.5L2400.7,1115.6L2392.9,1106.2L2385.1,1096.3L2377.8,1086.5L2370,1075.6L2362.7,1064.9L2354.9,1053L2347.5,1041.4L2340.2,1029.3L2332.4,1016L2325.1,1002.9L2317.3,988.6L2309.9,974.6L2302.1,959.3L2294.4,943.6L2286.6,927.3L2273.2,898.3L2259.8,868L2245.9,835.5L2231.2,799.8L2218.3,767.5L2204.4,732.3L2159.9,616.9L2143.9,575.9L2128.8,537.9L2114.9,504.3L2107.6,486.9L2100.2,470L2093.3,454.5L2086.4,439.4L2079.9,425.7L2073.4,412.5L2066.9,399.8L2060.9,388.4L2053.5,375.1L2046.2,362.7L2038.8,350.9L2031.9,340.6L2025,331.1L2018.1,322.3L2011.2,314.3L2004.7,307.6L1997.8,301.2L1991.3,296L1987.8,293.5L1984.4,291.2L1980.9,289.2L1977.9,287.6L1974.4,286L1971,284.6L1967.5,283.4L1964.5,282.6L1961,281.8L1958,281.3L1954.5,281L1951.5,280.9L1948.5,281L1945,281.3L1942,281.7L1938.5,282.5L1935.5,283.3L1932.1,284.4L1928.6,285.8L1925.1,287.4L1922.1,289L1918.7,291L1915.2,293.2L1911.7,295.6L1905.3,300.8L1898.3,307.2L1891.9,313.9L1884.9,321.8L1878,330.5L1871.1,340L1864.2,350.3L1856.8,362L1849.5,374.4L1842.1,387.6L1836.1,399L1829.6,411.7L1823.1,424.9L1816.2,439.4L1809.3,454.5L1802.4,470L1795,486.9L1787.7,504.3L1773.8,537.9L1758.7,575.9L1742.7,616.9L1698.2,732.3L1684.3,767.5L1671.4,799.8L1656.7,835.5L1642.8,868L1629.4,898.3L1616,927.4L1608.2,943.6L1600.5,959.4L1592.7,974.6L1585.3,988.6L1577.5,1002.9L1570.2,1016L1562.4,1029.3L1555.1,1041.4L1547.7,1053L1539.9,1064.9L1532.6,1075.6L1524.8,1086.5L1517,1096.8L1509.2,1106.7L1501.5,1116.1L1493.7,1125L1485.5,1134L1476.8,1142.8L1468.2,1151.2L1459.5,1159L1450.9,1166.3L1441.8,1173.5L1432.7,1180.1L1423.2,1186.6L1413.7,1192.6L1404.2,1198.1L1394.2,1203.3L1384.3,1208.2L1373.9,1212.7L1363.5,1216.9L1352.7,1220.8L1341.5,1224.4L1330.2,1227.6L1319,1230.5L1307.3,1233.1L1295.2,1235.5L1282.7,1237.6L1269.3,1239.6L1255.5,1241.3L1241.2,1242.9L1226.5,1244.2L1210.5,1245.3L1193.6,1246.3L1175.5,1247.1L1156,1247.8L1134.8,1248.4L1085.5,1249.2Z"/>
<path class="c" fill="#e78d0b" d="M1628.4,1245L1628.7,1241.1L1629.5,1235.7L1630.7,1230L1632.1,1223.7L1633.7,1217.6L1635.7,1211L1637.9,1203.8L1640.4,1196.8L1645.8,1182.2L1652.3,1166.7L1659.6,1150.7L1667.5,1134.5L1676.2,1117.8L1685.6,1100.8L1695.7,1083.3L1706.6,1065.5L1718,1047.5L1730.3,1028.9L1743.2,1010.1L1756.8,991L1768.3,975.3L1780.2,959.4L1792.5,943.4L1805.2,927.2L1818.5,910.7L1832,894.1L1845.9,877.6L1860.3,860.7L1885.2,832.3L1911.2,803.5L1933.9,778.9L1976.3,734L1991.8,717.2L2006.8,700.6L2022.9,682.5L2038.6,664.6L2053.9,646.7L2068.8,629.1L2084,610.6L2098.7,592.3L2112.9,574.1L2126.6,556.1L2139.7,538.5L2152.3,521.1L2164.4,503.8L2175.9,486.9L2186.2,471.1L2196,455.6L2205.4,440.2L2214.3,425.1L2222.7,410.1L2230.4,395.7L2237.7,381.4L2244.3,367.6L2250.5,354L2256.1,340.5L2261,327.9L2265.2,315.7L2268.7,304L2271.5,293.3L2272.6,288L2273.4,283.4L2273.9,279.9L2274.2,276.1L2274.2,280.9L2273.9,284.8L2273.4,288.2L2272.6,292.8L2271.5,298.1L2268.7,308.9L2265.2,320.6L2261,332.7L2256.1,345.3L2250.5,358.9L2244.3,372.5L2237.7,386.2L2230.4,400.5L2222.7,415L2214.3,429.9L2205.4,445.1L2196,460.4L2186.2,475.9L2175.9,491.7L2164.4,508.6L2152.3,525.9L2139.7,543.4L2126.6,561L2112.9,579L2098.7,597.1L2084,615.4L2068.8,633.9L2053.9,651.6L2038.6,669.5L2022.9,687.4L2006.8,705.5L1991.8,722L1976.3,738.9L1933.9,783.8L1911.2,808.3L1885.2,837.2L1860.3,865.6L1845.9,882.4L1832,899L1818.5,915.5L1805.2,932L1792.5,948.2L1780.2,964.2L1768.3,980.1L1756.8,995.8L1743.2,1014.9L1730.3,1033.7L1718,1052.3L1706.6,1070.3L1695.7,1088.1L1685.6,1105.6L1676.2,1122.6L1667.5,1139.3L1659.6,1155.5L1652.3,1171.5L1645.8,1187L1640.4,1201.6L1637.9,1208.7L1635.7,1215.8L1633.7,1222.4L1632.1,1228.5L1630.7,1234.8L1629.5,1240.6L1628.7,1246L1628.4,1249.8Z"/>
<path class="c" fill="#a7d503" d="M1085.5,-366.4L1224.3,-366.4L1224.8,-363.7L1234.3,-278.2L1244.2,-191.7L1253.3,-115.4L1262.4,-41.6L1271.4,29.7L1281,101.9L1290,168.3L1299.5,235.4L1309.1,299.9L1318.6,362L1328.1,421.5L1338,481.2L1347.5,535.8L1357.5,590.4L1367.4,642.4L1377.4,692L1387.3,739.1L1397.3,783.8L1407.2,826.1L1417.6,867.8L1428,907L1433.1,925.7L1438.3,943.8L1443.5,961.3L1448.7,978.2L1453.9,994.5L1459.1,1010.2L1464.3,1025.4L1469.5,1040L1474.6,1054.1L1480.3,1068.7L1485.5,1081.6L1490.6,1093.9L1495.8,1105.7L1501.5,1117.9L1506.6,1128.7L1512.3,1139.7L1517.9,1150.1L1523.5,1160L1528.7,1168.6L1534.3,1177.3L1539.9,1185.4L1545.5,1193L1550.7,1199.6L1555.9,1205.6L1561.1,1211.2L1566.7,1216.8L1571.9,1221.5L1577.5,1226L1582.7,1229.8L1588.4,1233.3L1593.5,1236.2L1599.2,1238.8L1604.8,1241L1610.4,1242.7L1616,1243.9L1621.6,1244.7L1627.3,1245L1632.9,1244.8L1638.5,1244.3L1644.1,1243.3L1649.7,1241.9L1655.8,1239.9L1661.4,1237.6L1667.5,1234.8L1673.5,1231.5L1679.6,1227.7L1685.6,1223.5L1691.7,1218.9L1697.7,1213.9L1704.2,1208.1L1710.3,1202.2L1716.8,1195.5L1722.8,1188.9L1729.3,1181.4L1735.3,1174.1L1741.4,1166.4L1747.5,1158.3L1753.5,1150L1759.6,1141.3L1766,1131.7L1772.1,1122.4L1778.6,1112.2L1791.5,1090.7L1805,1067.3L1818.8,1042L1833.1,1014.7L1846,989.1L1859.9,960.8L1874.1,930.9L1889.3,898.4L1903.5,867.3L1919.1,832.8L1975.3,706.6L1998.2,655.7L2022,604L2033.2,580.1L2043.6,558.5L2056.1,532.9L2067.8,509.7L2079.5,487.2L2090.7,466.3L2101.5,446.8L2112.3,428.2L2122.7,411L2133.1,394.6L2139.6,384.8L2145.6,376L2151.7,367.5L2157.7,359.2L2163.8,351.4L2169.8,343.8L2175.9,336.6L2181.5,330.2L2187.6,323.7L2193.2,318L2198.8,312.6L2204.4,307.6L2210.1,302.9L2215.7,298.5L2221.3,294.5L2226.9,290.9L2232.5,287.7L2238.2,284.8L2243.8,282.3L2249,280.4L2254.6,278.7L2259.8,277.5L2265,276.7L2270.1,276.2L2275.3,276.1L2280.5,276.4L2285.7,277L2290.9,278.1L2296.1,279.5L2301.3,281.3L2306.5,283.6L2311.2,286L2317.7,289.9L2324.2,294.4L2330.7,299.6L2337.2,305.5L2343.6,312.1L2349.7,318.9L2356.2,326.9L2362.2,335L2368.7,344.4L2374.8,353.9L2380.8,364L2386.9,374.9L2392.9,386.4L2399,398.6L2405,411.5L2411.1,425.1L2417.1,439.5L2423.2,454.6L2429.2,470.4L2434.9,485.8L2440.9,503.1L2447,521.2L2453,540.1L2458.6,558.3L2464.7,578.7L2470.3,598.4L2475.9,618.8L2481.6,639.9L2487.6,663.4L2493.2,686L2498.9,709.4L2504.5,733.5L2510.1,758.3L2515.7,784L2527,837.5L2538.2,894.2L2549,951.7L2560.2,1014.7L2571.1,1078.5L2581.9,1145.3L2592.7,1215.3L2603.5,1288.6L2613.9,1362L2624.7,1441.8L2635,1521.6L2645.4,1604.5L2655.8,1690.7L2665.3,1772.6L2677.4,1880.8L2677.8,1883.6L2814.5,1883.6L2814.5,1888.4L2677.8,1888.4L2677.4,1885.6L2665.3,1777.4L2655.8,1695.5L2645.4,1609.4L2635,1526.4L2624.7,1446.6L2613.9,1366.9L2603.5,1293.4L2592.7,1220.2L2581.9,1150.1L2571.1,1083.3L2560.2,1019.6L2549,956.5L2538.2,899L2527,842.3L2515.7,788.8L2510.1,763.2L2504.5,738.3L2498.9,714.2L2493.2,690.9L2487.6,668.3L2481.6,644.7L2475.9,623.6L2470.3,603.3L2464.7,583.6L2458.6,563.2L2453,544.9L2447,526.1L2440.9,508L2434.9,490.7L2429.2,475.3L2423.2,459.4L2417.1,444.3L2411.1,430L2405,416.3L2399,403.4L2392.9,391.2L2386.9,379.7L2380.8,368.9L2374.8,358.7L2368.7,349.3L2362.2,339.8L2356.2,331.7L2349.7,323.7L2343.6,316.9L2337.2,310.3L2330.7,304.4L2324.2,299.2L2317.7,294.7L2311.2,290.8L2306.5,288.4L2301.3,286.2L2296.1,284.3L2290.9,282.9L2285.7,281.9L2280.5,281.2L2275.3,280.9L2270.1,281L2265,281.5L2259.8,282.3L2254.6,283.5L2249,285.2L2243.8,287.2L2238.2,289.6L2232.5,292.5L2226.9,295.7L2221.3,299.4L2215.7,303.4L2210.1,307.7L2204.4,312.4L2198.8,317.4L2193.2,322.8L2187.6,328.5L2181.5,335.1L2175.9,341.4L2169.8,348.6L2163.8,356.2L2157.7,364.1L2151.7,372.3L2145.6,380.8L2139.6,389.7L2133.1,399.5L2122.7,415.8L2112.3,433L2101.5,451.7L2090.7,471.1L2079.5,492L2067.8,514.5L2056.1,537.7L2043.6,563.3L2033.2,585L2022,608.8L1998.2,660.6L1975.3,711.5L1919.1,837.6L1903.5,872.1L1889.3,903.3L1874.1,935.7L1859.9,965.7L1846,993.9L1833.1,1019.6L1818.8,1046.8L1805,1072.2L1791.5,1095.6L1778.6,1117L1772.1,1127.3L1766,1136.5L1759.6,1146.2L1753.5,1154.8L1747.5,1163.2L1741.4,1171.2L1735.3,1178.9L1729.3,1186.3L1722.8,1193.8L1716.8,1200.4L1710.3,1207.1L1704.2,1212.9L1697.7,1218.7L1691.7,1223.7L1685.6,1228.3L1679.6,1232.5L1673.5,1236.3L1667.5,1239.6L1661.4,1242.5L1655.8,1244.7L1649.7,1246.7L1644.1,1248.1L1638.5,1249.1L1632.9,1249.7L1627.3,1249.8L1621.6,1249.5L1616,1248.7L1610.4,1247.5L1604.8,1245.8L1599.2,1243.7L1593.5,1241L1588.4,1238.2L1582.7,1234.6L1577.5,1230.8L1571.9,1226.3L1566.7,1221.6L1561.1,1216.1L1555.9,1210.5L1550.7,1204.4L1545.5,1197.9L1539.9,1190.3L1534.3,1182.1L1528.7,1173.4L1523.5,1164.8L1517.9,1155L1512.3,1144.5L1506.6,1133.5L1501.5,1122.8L1495.8,1110.6L1490.6,1098.7L1485.5,1086.4L1480.3,1073.5L1474.6,1058.9L1469.5,1044.9L1464.3,1030.3L1459.1,1015.1L1453.9,999.3L1448.7,983L1443.5,966.1L1438.3,948.6L1433.1,930.5L1428,911.8L1417.6,872.6L1407.2,830.9L1397.3,788.6L1387.3,743.9L1377.4,696.8L1367.4,647.3L1357.5,595.2L1347.5,540.6L1338,486L1328.1,426.4L1318.6,366.8L1309.1,304.8L1299.5,240.2L1290,173.2L1281,106.7L1271.4,34.6L1262.4,-36.8L1253.3,-110.6L1244.2,-186.9L1234.3,-273.3L1224.8,-358.9L1224.3,-361.6L1085.5,-361.6Z"/>
<path class="c" fill="#58fc2a" d="M1628.4,1245L1628.6,1236.1L1628.9,1229.6L1629.4,1223.1L1630,1216.7L1630.8,1210.3L1632,1202.9L1633.1,1196.5L1634.5,1189.4L1636.2,1182.3L1638.1,1174.7L1640,1167.8L1642.3,1160.5L1644.7,1153.1L1647.3,1145.9L1650,1138.6L1653.1,1131L1656.3,1123.4L1659.7,1115.9L1667.2,1100.6L1675.4,1085L1684.3,1069.5L1694,1053.7L1704.6,1037.4L1716.1,1020.8L1728.5,1003.8L1739,990L1750.2,975.9L1761.8,961.6L1774.2,946.8L1787.3,931.7L1801,916.2L1815.6,900.2L1831.1,883.4L1858.2,854.8L1889.2,823L1919.4,792.5L1993.5,718.2L2031.2,679.9L2049.7,660.7L2067,642.5L2083.2,625.1L2098.3,608.5L2113.8,591L2128.5,574L2142.4,557.5L2155.3,541.5L2167.6,525.8L2179.1,510.5L2189.9,495.4L2199.9,480.8L2209,466.8L2217.5,452.9L2225.4,439.2L2232.7,425.8L2239.3,412.7L2245.5,399.5L2250.9,386.5L2255.8,373.9L2260.2,361.1L2263.9,348.7L2267.1,336L2269.7,323.7L2271.6,311.9L2273.1,299.7L2273.9,288.6L2274.2,276.1L2274.2,280.9L2273.9,293.5L2273.1,304.5L2271.6,316.7L2269.7,328.5L2267.1,340.8L2263.9,353.5L2260.2,366L2255.8,378.7L2250.9,391.3L2245.5,404.3L2239.3,417.5L2232.7,430.7L2225.4,444.1L2217.5,457.8L2209,471.7L2199.9,485.6L2189.9,500.3L2179.1,515.3L2167.6,530.6L2155.3,546.4L2142.4,562.3L2128.5,578.9L2113.8,595.9L2098.3,613.3L2083.2,630L2067,647.3L2049.7,665.5L2031.2,684.8L1993.5,723L1919.4,797.3L1889.2,827.8L1858.2,859.7L1831.1,888.3L1815.6,905L1801,921L1787.3,936.5L1774.2,951.7L1761.8,966.5L1750.2,980.7L1739,994.9L1728.5,1008.6L1716.1,1025.7L1704.6,1042.2L1694,1058.5L1684.3,1074.3L1675.4,1089.9L1667.2,1105.4L1659.7,1120.7L1656.3,1128.3L1653.1,1135.8L1650,1143.5L1647.3,1150.7L1644.7,1158L1642.3,1165.3L1640,1172.7L1638.1,1179.6L1636.2,1187.2L1634.5,1194.2L1633.1,1201.4L1632,1207.7L1630.8,1215.1L1630,1221.6L1629.4,1228L1628.9,1234.4L1628.6,1240.9L1628.4,1249.8Z"/>
<path class="c" fill="#18f472" d="M1085.5,359.5L1093.8,372L1102.4,385.9L1111,400.4L1120.1,416.4L1129.2,433L1138.7,451.1L1148.7,470.7L1158.6,490.8L1168.6,511.5L1179.4,534.6L1190.6,559.1L1202.3,584.9L1226.9,640.8L1278.4,759.3L1300.8,810.6L1324.6,863.7L1335.4,887.2L1346.2,910.4L1358.8,936.6L1370.9,961.4L1382.6,984.5L1394.2,1006.9L1405.5,1027.8L1416.7,1048L1427.5,1066.6L1438.3,1084.4L1451.3,1104.7L1457.8,1114.4L1464.3,1123.9L1470.8,1132.9L1476.8,1141.1L1483.3,1149.6L1489.3,1157.2L1495.8,1165L1501.9,1172L1507.9,1178.7L1514,1185.1L1520.5,1191.6L1526.5,1197.4L1532.6,1202.8L1538.6,1207.9L1544.7,1212.7L1550.7,1217.2L1556.8,1221.3L1562.8,1225.1L1568.9,1228.6L1574.9,1231.8L1581,1234.6L1586.6,1236.9L1592.7,1239.1L1598.7,1240.9L1604.8,1242.4L1610.4,1243.5L1616.5,1244.3L1622.5,1244.8L1628.6,1245L1634.2,1244.8L1639.8,1244.4L1645.4,1243.6L1651,1242.6L1657.1,1241.2L1662.7,1239.5L1668.3,1237.6L1674,1235.4L1680,1232.6L1685.6,1229.8L1691.2,1226.7L1696.9,1223.3L1702.9,1219.3L1708.5,1215.4L1714.6,1210.8L1720.2,1206.2L1726.3,1201L1731.9,1195.9L1737.9,1190L1744,1183.9L1750,1177.4L1755.7,1171.2L1761.7,1164.2L1767.8,1156.8L1773.8,1149.2L1779.9,1141.3L1785.9,1133.1L1798,1115.9L1810.6,1096.9L1823.1,1076.8L1833.5,1059.4L1844.3,1040.5L1855.1,1020.9L1865.9,1000.6L1877.2,978.8L1888.4,956.4L1900.5,931.5L1912.6,906L1933.4,861.1L1956.7,808.9L1978.8,758.6L2029.8,641L2054.4,585.2L2066.5,558.4L2078.2,533L2089.4,509.1L2099.8,487.5L2110.6,465.8L2121.4,444.7L2131.8,425.3L2141.7,407.4L2151.7,390.4L2161.2,374.9L2170.3,360.9L2179.4,347.8L2188.9,335.1L2193.6,329.1L2198.4,323.4L2203.1,318L2207.9,312.9L2212.6,308L2217,303.9L2221.7,299.6L2226,296.1L2230.8,292.4L2235.1,289.4L2239.4,286.7L2243.8,284.3L2248.1,282.2L2252.4,280.3L2256.7,278.8L2261.1,277.7L2265.4,276.8L2269.3,276.3L2273.6,276.1L2277.5,276.2L2281.8,276.6L2285.7,277.3L2290,278.5L2293.9,279.8L2297.8,281.5L2301.7,283.4L2305.6,285.7L2309.5,288.3L2313.4,291.2L2317.3,294.5L2322.5,299.4L2327.6,304.9L2332.8,311L2338,317.8L2343.2,325.2L2348.4,333.3L2353.6,342.1L2358.3,350.7L2363.5,360.8L2368.3,370.8L2373.5,382.3L2378.2,393.5L2383.4,406.5L2388.2,419L2392.9,432.3L2397.7,446.2L2402.4,460.8L2407.2,476L2412,492L2416.7,508.7L2421.5,526.2L2426.2,544.4L2431,563.3L2435.3,581.2L2444.4,620.8L2453.5,663.3L2462.5,708.8L2471.6,757.4L2480.7,809.1L2489.3,861.4L2498,916.7L2506.6,975.1L2515.3,1036.6L2523.5,1098.1L2532.1,1166L2540.4,1233.6L2548.6,1304.4L2556.8,1378.4L2565,1455.6L2573.2,1536.2L2581.4,1620.1L2589.2,1702.9L2597.4,1793.6L2605.2,1883L2605.6,1883.6L2814.5,1883.6L2814.5,1888.4L2605.6,1888.4L2605.2,1887.8L2597.4,1798.5L2589.2,1707.7L2581.4,1625L2573.2,1541L2565,1460.4L2556.8,1383.2L2548.6,1309.2L2540.4,1238.5L2532.1,1170.8L2523.5,1102.9L2515.3,1041.4L2506.6,979.9L2498,921.5L2489.3,866.3L2480.7,814L2471.6,762.3L2462.5,713.7L2453.5,668.2L2444.4,625.6L2435.3,586L2431,568.1L2426.2,549.2L2421.5,531L2416.7,513.6L2412,496.9L2407.2,480.9L2402.4,465.6L2397.7,451L2392.9,437.1L2388.2,423.9L2383.4,411.3L2378.2,398.3L2373.5,387.1L2368.3,375.6L2363.5,365.7L2358.3,355.6L2353.6,346.9L2348.4,338.1L2343.2,330L2338,322.6L2332.8,315.8L2327.6,309.7L2322.5,304.2L2317.3,299.3L2313.4,296.1L2309.5,293.1L2305.6,290.5L2301.7,288.3L2297.8,286.3L2293.9,284.6L2290,283.3L2285.7,282.2L2281.8,281.5L2277.5,281L2273.6,280.9L2269.3,281.1L2265.4,281.6L2261.1,282.5L2256.7,283.7L2252.4,285.2L2248.1,287L2243.8,289.1L2239.4,291.5L2235.1,294.3L2230.8,297.3L2226,300.9L2221.7,304.5L2217,308.7L2212.6,312.9L2207.9,317.7L2203.1,322.8L2198.4,328.3L2193.6,334L2188.9,339.9L2179.4,352.7L2170.3,365.8L2161.2,379.7L2151.7,395.2L2141.7,412.2L2131.8,430.1L2121.4,449.5L2110.6,470.6L2099.8,492.4L2089.4,513.9L2078.2,537.8L2066.5,563.2L2054.4,590L2029.8,645.9L1978.8,763.4L1956.7,813.7L1933.4,865.9L1912.6,910.9L1900.5,936.4L1888.4,961.2L1877.2,983.6L1865.9,1005.4L1855.1,1025.7L1844.3,1045.4L1833.5,1064.2L1823.1,1081.7L1810.6,1101.8L1798,1120.7L1785.9,1138L1779.9,1146.1L1773.8,1154.1L1767.8,1161.7L1761.7,1169L1755.7,1176L1750,1182.3L1744,1188.7L1737.9,1194.9L1731.9,1200.7L1726.3,1205.8L1720.2,1211L1714.6,1215.6L1708.5,1220.2L1702.9,1224.2L1696.9,1228.2L1691.2,1231.6L1685.6,1234.7L1680,1237.5L1674,1240.2L1668.3,1242.4L1662.7,1244.4L1657.1,1246L1651,1247.4L1645.4,1248.5L1639.8,1249.2L1634.2,1249.7L1628.6,1249.8L1622.5,1249.7L1616.5,1249.2L1610.4,1248.3L1604.8,1247.2L1598.7,1245.7L1592.7,1243.9L1586.6,1241.7L1581,1239.4L1574.9,1236.6L1568.9,1233.4L1562.8,1230L1556.8,1226.1L1550.7,1222L1544.7,1217.5L1538.6,1212.7L1532.6,1207.6L1526.5,1202.2L1520.5,1196.5L1514,1190L1507.9,1183.6L1501.9,1176.9L1495.8,1169.9L1489.3,1162.1L1483.3,1154.5L1476.8,1146L1470.8,1137.8L1464.3,1128.7L1457.8,1119.3L1451.3,1109.6L1438.3,1089.2L1427.5,1071.4L1416.7,1052.8L1405.5,1032.7L1394.2,1011.8L1382.6,989.3L1370.9,966.2L1358.8,941.5L1346.2,915.2L1335.4,892.1L1324.6,868.5L1300.8,815.4L1278.4,764.1L1226.9,645.6L1202.3,589.8L1190.6,563.9L1179.4,539.4L1168.6,516.4L1158.6,495.7L1148.7,475.5L1138.7,456L1129.2,437.9L1120.1,421.2L1111,405.3L1102.4,390.7L1093.8,376.8L1085.5,364.3Z"/>
<path class="c" fill="#00bfbf" d="M1628.4,1245L1628.7,1229.7L1629.2,1220.8L1629.9,1212.5L1630.7,1204.4L1631.6,1196.5L1632.8,1188.6L1634.1,1180.8L1635.5,1173L1637.1,1165.2L1638.9,1157.5L1641,1149.1L1643.1,1141.3L1645.5,1133.1L1648.1,1124.9L1650.8,1116.7L1653.8,1108.6L1656.8,1100.4L1663.4,1084.3L1670.9,1067.8L1678.9,1051.4L1687.8,1034.7L1697.4,1018L1707.7,1001L1718.8,983.8L1730.5,966.8L1742.7,949.8L1755.8,932.4L1769.7,914.8L1784.4,896.8L1800.1,878.4L1816.7,859.5L1834.3,840L1850.6,822.5L1867.9,804.4L1886.3,785.4L1906.3,765.2L1945.2,726.6L2016.6,656.9L2043.9,630L2071.4,602.6L2095.3,578.2L2108.8,564L2121.6,550.4L2133.7,537.2L2145.2,524.5L2156,512.1L2166.3,499.9L2176,488.2L2185.2,476.7L2196.2,462.3L2206.5,448.2L2215.9,434.6L2224.6,421.2L2232.5,408.1L2239.8,395.2L2246.4,382.4L2252.2,370L2257.4,357.6L2261.9,345.3L2265.6,333.6L2268.7,321.8L2270,316L2271.1,310.1L2272.7,299.3L2273.4,293.4L2273.9,287L2274.2,276.1L2274.2,280.9L2273.9,291.8L2273.4,298.2L2272.7,304.2L2271.1,314.9L2270,320.8L2268.7,326.7L2265.6,338.4L2261.9,350.2L2257.4,362.5L2252.2,374.8L2246.4,387.2L2239.8,400L2232.5,413L2224.6,426L2215.9,439.4L2206.5,453L2196.2,467.2L2185.2,481.5L2176,493L2166.3,504.8L2156,516.9L2145.2,529.3L2133.7,542.1L2121.6,555.3L2108.8,568.8L2095.3,583L2071.4,607.4L2043.9,634.9L2016.6,661.7L1945.2,731.4L1906.3,770L1886.3,790.2L1867.9,809.2L1850.6,827.4L1834.3,844.9L1816.7,864.3L1800.1,883.2L1784.4,901.7L1769.7,919.6L1755.8,937.3L1742.7,954.6L1730.5,971.7L1718.8,988.7L1707.7,1005.9L1697.4,1022.8L1687.8,1039.5L1678.9,1056.2L1670.9,1072.6L1663.4,1089.1L1656.8,1105.3L1653.8,1113.4L1650.8,1121.5L1648.1,1129.7L1645.5,1137.9L1643.1,1146.2L1641,1153.9L1638.9,1162.3L1637.1,1170.1L1635.5,1177.9L1634.1,1185.7L1632.8,1193.5L1631.6,1201.3L1630.7,1209.3L1629.9,1217.3L1629.2,1225.6L1628.7,1234.5L1628.4,1249.8Z"/>
<path class="c" fill="#1872f4" d="M1085.5,1883.6L1404.6,1883.6L1405,1882.6L1412,1817.7L1418.9,1757.8L1424.9,1709.3L1431,1664.2L1437.5,1619.6L1443.9,1578.5L1450.9,1538.4L1454.3,1519.7L1457.8,1501.9L1461.2,1485L1465.1,1466.9L1468.6,1451.7L1472.5,1435.5L1475.9,1421.9L1479.8,1407.4L1483.7,1393.8L1487.6,1381L1491.5,1369.1L1495.4,1357.9L1499.3,1347.5L1503.6,1336.7L1507.5,1327.7L1511.8,1318.5L1516.1,1310L1520.5,1302.3L1525.7,1293.9L1530.8,1286.4L1536.5,1279.2L1542.1,1273L1547.7,1267.6L1550.7,1265L1553.8,1262.6L1559.8,1258.5L1562.8,1256.7L1566.3,1254.9L1572.8,1252L1579.3,1249.7L1586.2,1248L1593.5,1246.6L1600.9,1245.8L1609.1,1245.3L1618.2,1245L1645,1244.8L1653.6,1244.4L1661.4,1243.8L1670.5,1242.6L1678.7,1240.9L1686.9,1238.7L1694.7,1236L1699.5,1234.1L1704.2,1231.9L1709,1229.5L1713.3,1227.1L1718.1,1224.2L1722.4,1221.3L1726.7,1218.1L1731,1214.8L1735.8,1210.8L1740.1,1207L1744.4,1202.8L1748.7,1198.5L1753.1,1193.9L1757.4,1189.1L1766,1178.6L1771.2,1171.9L1776.4,1164.8L1781.6,1157.3L1786.8,1149.5L1792,1141.3L1797.2,1132.8L1802.4,1123.9L1808,1113.9L1813.2,1104.3L1818.8,1093.6L1829.6,1071.9L1840.8,1047.9L1852.5,1021.6L1863.7,995L1875,967.3L1886.7,937.6L1899.2,904.6L1910.9,873.1L1923.8,837.4L1972.3,701.7L1992.2,646.8L2003,617.7L2012.9,591.4L2022.4,566.8L2031.9,543L2043.2,515.7L2054,490.6L2064.4,467.5L2074.7,445.7L2084.7,425.8L2094.6,407.2L2104.6,389.8L2114.1,374.3L2123.2,360.6L2127.9,353.9L2132.2,348.1L2140.9,337.1L2145.2,332L2150,326.7L2154.3,322.1L2159,317.4L2163.4,313.3L2168.1,309.1L2172.4,305.6L2177.2,302L2181.5,298.9L2186.3,295.8L2191,293L2196.2,290.2L2201.4,287.7L2206.6,285.5L2211.8,283.6L2217.4,281.8L2223,280.3L2228.6,279.1L2233.8,278.2L2239,277.5L2244.6,276.9L2250.7,276.5L2262.4,276.1L2290,275.9L2298.2,275.6L2305.2,274.9L2313.4,273.7L2320.7,272.1L2327.6,269.9L2334.1,267.2L2338.5,265.1L2342.3,262.8L2346.2,260.3L2350.1,257.4L2354,254.2L2357.5,251.1L2361.4,247.2L2364.8,243.3L2368.3,239.2L2371.7,234.7L2375.2,229.8L2378.2,225.2L2381.7,219.5L2384.7,214.2L2388.2,207.7L2391.2,201.7L2395.1,193.3L2399,184.4L2402.9,174.7L2406.8,164.4L2410.7,153.3L2414.1,142.8L2418,130.2L2421.5,118.3L2424.9,105.8L2428.4,92.5L2431.8,78.5L2435.3,63.8L2438.8,48.3L2442.2,31.9L2448.7,-0.9L2455.2,-36.9L2461.7,-76.1L2467.7,-115.9L2473.8,-158.8L2479.4,-201.7L2485,-247.6L2491.5,-304.4L2498,-365.7L2498.4,-366.4L2814.5,-366.4L2814.5,-361.6L2498.4,-361.6L2498,-360.9L2491.5,-299.6L2485,-242.7L2479.4,-196.9L2473.8,-154L2467.7,-111.1L2461.7,-71.3L2455.2,-32L2448.7,3.9L2442.2,36.8L2438.8,53.1L2435.3,68.6L2431.8,83.4L2428.4,97.3L2424.9,110.6L2421.5,123.2L2418,135L2414.1,147.6L2410.7,158.1L2406.8,169.2L2402.9,179.6L2399,189.2L2395.1,198.2L2391.2,206.5L2388.2,212.6L2384.7,219L2381.7,224.3L2378.2,230L2375.2,234.6L2371.7,239.5L2368.3,244L2364.8,248.2L2361.4,252L2357.5,255.9L2354,259.1L2350.1,262.3L2346.2,265.1L2342.3,267.7L2338.5,269.9L2334.1,272.1L2327.6,274.7L2320.7,276.9L2313.4,278.6L2305.2,279.8L2298.2,280.4L2290,280.8L2262.4,281L2250.7,281.4L2244.6,281.8L2239,282.4L2233.8,283.1L2228.6,284L2223,285.2L2217.4,286.7L2211.8,288.4L2206.6,290.4L2201.4,292.6L2196.2,295L2191,297.8L2186.3,300.7L2181.5,303.7L2177.2,306.8L2172.4,310.4L2168.1,314L2163.4,318.2L2159,322.2L2154.3,327L2150,331.5L2145.2,336.9L2140.9,342L2132.2,352.9L2127.9,358.7L2123.2,365.5L2114.1,379.1L2104.6,394.6L2094.6,412L2084.7,430.7L2074.7,450.5L2064.4,472.4L2054,495.4L2043.2,520.5L2031.9,547.8L2022.4,571.7L2012.9,596.2L2003,622.5L1992.2,651.7L1972.3,706.6L1923.8,842.2L1910.9,877.9L1899.2,909.4L1886.7,942.4L1875,972.2L1863.7,999.9L1852.5,1026.4L1840.8,1052.7L1829.6,1076.7L1818.8,1098.4L1813.2,1109.1L1808,1118.7L1802.4,1128.7L1797.2,1137.6L1792,1146.1L1786.8,1154.3L1781.6,1162.1L1776.4,1169.6L1771.2,1176.7L1766,1183.4L1757.4,1193.9L1753.1,1198.7L1748.7,1203.3L1744.4,1207.7L1740.1,1211.8L1735.8,1215.7L1731,1219.6L1726.7,1223L1722.4,1226.1L1718.1,1229L1713.3,1231.9L1709,1234.3L1704.2,1236.8L1699.5,1238.9L1694.7,1240.9L1686.9,1243.6L1678.7,1245.8L1670.5,1247.4L1661.4,1248.6L1653.6,1249.3L1645,1249.7L1618.2,1249.9L1609.1,1250.1L1600.9,1250.6L1593.5,1251.5L1586.2,1252.8L1579.3,1254.6L1572.8,1256.8L1566.3,1259.7L1562.8,1261.6L1559.8,1263.4L1553.8,1267.5L1550.7,1269.9L1547.7,1272.4L1542.1,1277.8L1536.5,1284.1L1530.8,1291.2L1525.7,1298.7L1520.5,1307.1L1516.1,1314.9L1511.8,1323.4L1507.5,1332.6L1503.6,1341.6L1499.3,1352.3L1495.4,1362.8L1491.5,1373.9L1487.6,1385.9L1483.7,1398.6L1479.8,1412.2L1475.9,1426.7L1472.5,1440.3L1468.6,1456.5L1465.1,1471.7L1461.2,1489.8L1457.8,1506.8L1454.3,1524.6L1450.9,1543.2L1443.9,1583.3L1437.5,1624.4L1431,1669.1L1424.9,1714.1L1418.9,1762.7L1412,1822.6L1405,1887.4L1404.6,1888.4L1085.5,1888.4Z"/>
<path class="c" fill="#582afc" d="M1085.5,1245L1628.1,1245L1628.6,1244.7L2274,276.3L2274.5,276.1L2814.5,276.1L2814.5,280.9L2274.5,280.9L2274,281.2L1628.6,1249.6L1628.1,1249.8L1085.5,1249.8Z"/>
<path class="c" fill="#a703d5" d="M1085.5,430.5L1628.1,1244.6L1628.6,1244.7L2274,276.3L2274.5,276.5L2814.5,1086.6L2814.5,1091.5L2274.5,281.3L2274,281.2L1628.6,1249.6L1628.1,1249.4L1085.5,435.4Z"/>
<path class="c" fill="#e70b8d" d="M1499.2,1438.8H1563.8V1443.6H1499.2ZM1563.8,1341.9H1628.4V1346.7H1563.8ZM1628.4,1245H1693V1249.8H1628.4ZM1693,1148.1H1757.6V1152.9H1693ZM1757.6,1051.2H1822.1V1056H1757.6ZM1822.1,954.3H1886.7V959.2H1822.1ZM1886.7,857.4H1951.3V862.3H1886.7ZM1951.3,760.5H2015.9V765.4H1951.3ZM2015.9,663.6H2080.5V668.5H2015.9ZM2080.5,566.8H2145V571.6H2080.5ZM2145,469.9H2209.6V474.7H2145ZM2209.6,373H2274.2V377.8H2209.6ZM2274.2,276.1H2338.8V280.9H2274.2ZM2338.8,179.2H2403.4V184H2338.8ZM2403.4,82.3H2467.9V87.1H2403.4Z"/>
<path class="c" fill="none" stroke="#7f11ee" stroke-width="1.3" stroke-dasharray="4 25" d="M1877,-272.4L1881.1,-100.4L1885.1,62.2L1889.2,213.5L1893.2,355.4L1897.3,486.9L1901.3,607.3L1905.3,718.1L1907.4,769.3L1909.4,818.5L1911.4,865L1913.5,908.5L1915.5,949.3L1917.5,988.1L1919.5,1023.8L1921.5,1056.9L1923.6,1087.8L1925.6,1115.8L1927.6,1141.2L1929.6,1164.1L1931.6,1184.3L1933.7,1202.2L1935.7,1217.3L1936.7,1224L1937.7,1230L1938.7,1235.2L1939.8,1239.9L1940.8,1244L1941.8,1247.4"/>
<path class="c" fill="none" stroke="#7f11ee" stroke-width="1.3" stroke-dasharray="4 25" d="M1951.3,1247.4L1952.3,1244L1953.3,1240L1954.3,1235.4L1955.3,1230.2L1956.4,1224.2L1957.3,1217.7L1959.4,1202.5L1961.4,1184.9L1963.4,1164.8L1965.4,1142.1L1967.5,1116.5L1969.5,1088.7L1971.5,1058.3L1973.5,1025.3L1975.5,989.3L1977.6,950.8L1979.6,910.1L1981.6,866.8L1983.6,821L1985.6,772.6L1987.6,721.1L1991.7,611.5L1995.7,491.6L1999.7,360.8L2003.8,219.6L2007.8,68.9L2011.8,-92L2015.9,-264.1"/>
</g>
</svg>
</div><div class="ring"></div></div>
</body>
</html>
